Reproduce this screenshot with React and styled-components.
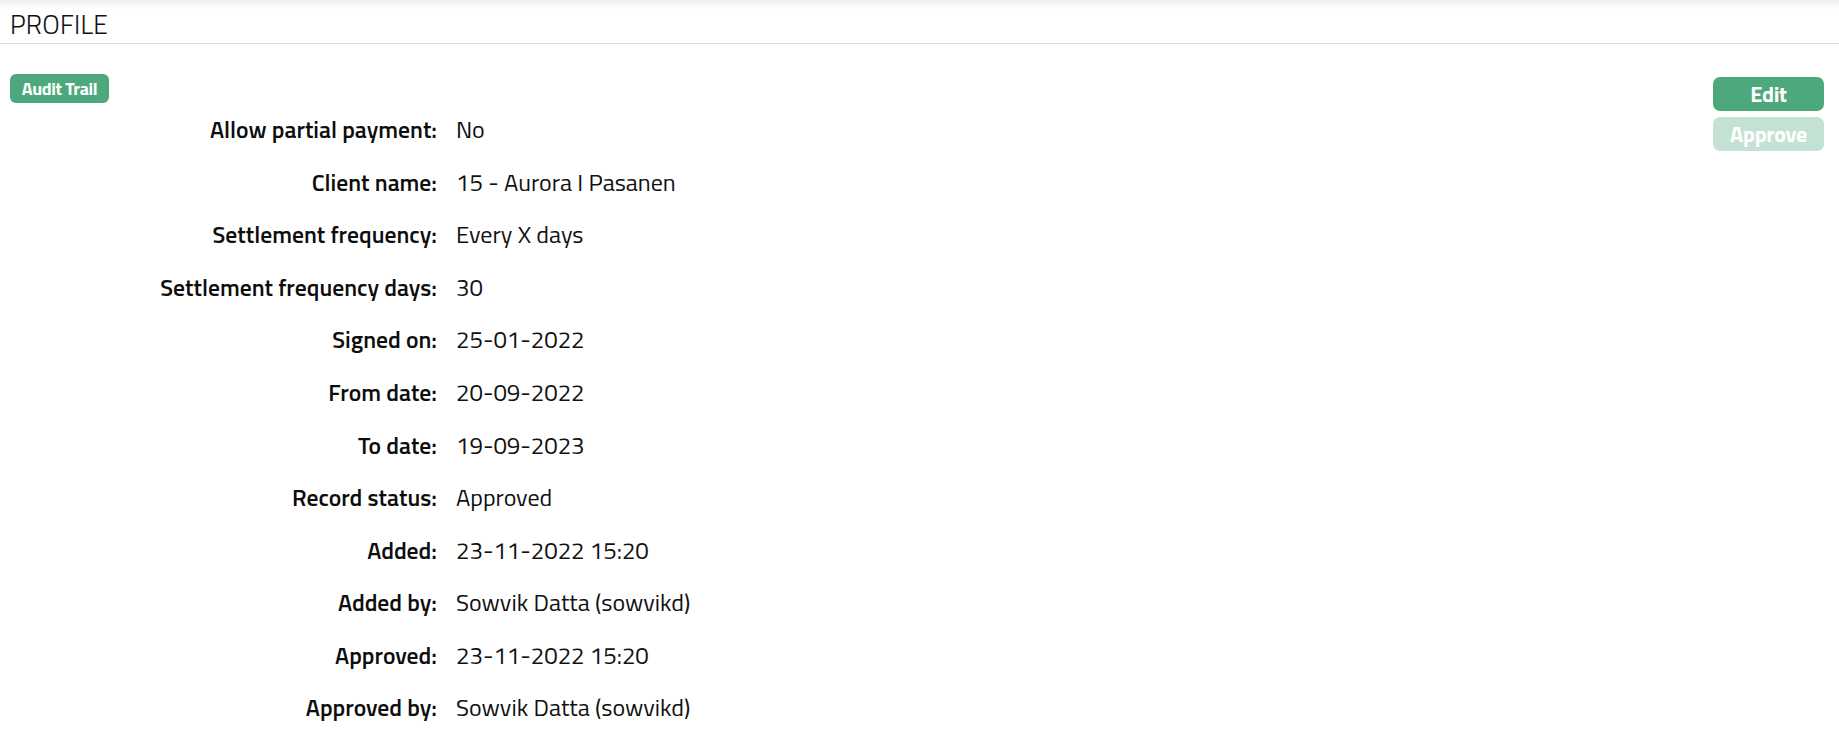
import React from "react";
import styled, { createGlobalStyle } from "styled-components";

const GlobalStyle = createGlobalStyle`
  html, body { margin: 0; padding: 0; background: #fff; }
  body { font-family: "Titillium Web", "Open Sans", "Noto Sans", sans-serif; color: #111; }
`;

const Page = styled.div`
  width: 1839px;
  min-height: 731px;
  background: #fff;
`;

const Header = styled.header`
  height: 44px;
  box-sizing: border-box;
  padding: 4px 10px 0;
  border-bottom: 1px solid #dcdcdc;
  background: linear-gradient(to bottom, #ececec 0px, #f7f7f7 4px, #fff 9px);
  display: flex;
  align-items: center;
`;

const Title = styled.h1`
  margin: 0;
  font-size: 26.4px;
  font-weight: 300;
  color: #111;
  letter-spacing: 0.2px;
`;

const Body = styled.main`
  display: flex;
  justify-content: space-between;
  align-items: flex-start;
  padding: 30px 15px 0 10px;
`;

const Left = styled.section`
  display: flex;
  flex-direction: column;
  align-items: flex-start;
`;

const Button = styled.button`
  border: none;
  cursor: pointer;
  color: #fff;
  font-family: inherit;
  font-weight: 700;
  padding: 0;
  background: ${(p) => (p.$disabled ? "#c3e2d3" : "#4da97b")};
  width: ${(p) => p.$w}px;
  height: ${(p) => p.$h}px;
  border-radius: ${(p) => p.$r}px;
  font-size: ${(p) => p.$fs}px;
  letter-spacing: ${(p) => p.$ls || 0}px;
  line-height: 1;
`;

const Actions = styled.div`
  display: flex;
  flex-direction: column;
  gap: 6px;
  margin-top: 3px;
`;

const Details = styled.dl`
  margin: 0;
  display: grid;
  grid-template-columns: 427px auto;
  grid-auto-rows: 52.55px;
  column-gap: 19px;
  align-items: center;
  font-size: 24px;
`;

const Label = styled.dt`
  text-align: right;
  font-weight: 600;
  font-size: 23.6px;
  color: #0d0d0d;
`;

const Value = styled.dd`
  margin: 0;
  font-weight: 400;
  color: #111;
`;

const rows = [
  ["Allow partial payment:", "No"],
  ["Client name:", "15 - Aurora I Pasanen"],
  ["Settlement frequency:", "Every X days"],
  ["Settlement frequency days:", "30"],
  ["Signed on:", "25-01-2022"],
  ["From date:", "20-09-2022"],
  ["To date:", "19-09-2023"],
  ["Record status:", "Approved"],
  ["Added:", "23-11-2022 15:20"],
  ["Added by:", "Sowvik Datta (sowvikd)"],
  ["Approved:", "23-11-2022 15:20"],
  ["Approved by:", "Sowvik Datta (sowvikd)"],
];

export default function App() {
  return (
    <>
      <GlobalStyle />
      <Page>
        <Header>
          <Title>PROFILE</Title>
        </Header>
        <Body>
          <Left>
            <Button $w={99} $h={29} $r={6} $fs={18} $ls={-0.4}>Audit Trail</Button>
            <Details>
              {rows.map(([l, v]) => (
                <React.Fragment key={l}>
                  <Label>{l}</Label>
                  <Value>{v}</Value>
                </React.Fragment>
              ))}
            </Details>
          </Left>
          <Actions>
            <Button $w={111} $h={34} $r={7} $fs={22} $ls={-0.3}>Edit</Button>
            <Button $w={111} $h={34} $r={7} $fs={22} $ls={-0.3} $disabled>Approve</Button>
          </Actions>
        </Body>
      </Page>
    </>
  );
}
